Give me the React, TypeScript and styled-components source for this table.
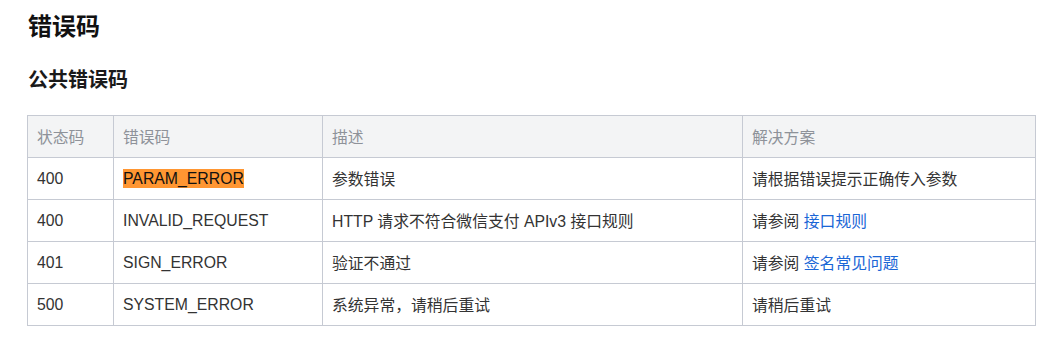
import React from 'react';
import styled, { createGlobalStyle } from 'styled-components';

const GlobalStyle = createGlobalStyle`
    body {
        margin: 0;
        background: #fff;
        font-family: "Liberation Sans", "Noto Sans CJK SC", sans-serif;
        color: #222;
    }
`;

const rows = [
    { status: '400', code: 'PARAM_ERROR', desc: '参数错误', fix: '请根据错误提示正确传入参数', mark: true },
    { status: '400', code: 'INVALID_REQUEST', desc: 'HTTP 请求不符合微信支付 APIv3 接口规则', fix: '请参阅', link: '接口规则' },
    { status: '401', code: 'SIGN_ERROR', desc: '验证不通过', fix: '请参阅', link: '签名常见问题' },
    { status: '500', code: 'SYSTEM_ERROR', desc: '系统异常，请稍后重试', fix: '请稍后重试' },
];

const App = () => {
    return (
        <>
            <GlobalStyle />
            <Page>
                <Title>错误码</Title>
                <SubTitle>公共错误码</SubTitle>
                <Table>
                    <colgroup>
                        <col style={{ width: 86 }} />
                        <col style={{ width: 209 }} />
                        <col style={{ width: 420 }} />
                        <col />
                    </colgroup>
                    <thead>
                        <tr>
                            <Th>状态码</Th>
                            <Th>错误码</Th>
                            <Th>描述</Th>
                            <Th>解决方案</Th>
                        </tr>
                    </thead>
                    <tbody>
                        {rows.map((r) => (
                            <tr key={r.code}>
                                <Td>{r.status}</Td>
                                <Td>{r.mark ? <Mark>{r.code}</Mark> : r.code}</Td>
                                <Td>{r.desc}</Td>
                                <Td>
                                    {r.fix}
                                    {r.link && <> <Link href="#">{r.link}</Link></>}
                                </Td>
                            </tr>
                        ))}
                    </tbody>
                </Table>
            </Page>
        </>
    );
};

const Page = styled.div`
    width: 1009px;
    padding: 10px 0 0 27px;
`;

const Title = styled.h1`
    margin: 0 0 0 1px;
    font-size: 24px;
    line-height: 34px;
    font-weight: 700;
    color: #111;
`;

const SubTitle = styled.h2`
    margin: 21px 0 0 1px;
    font-size: 20px;
    line-height: 30px;
    font-weight: 700;
    color: #1a1a1a;
`;

const Table = styled.table`
    margin-top: 20px;
    width: 1009px;
    border-collapse: collapse;
    table-layout: fixed;
    font-size: 15.8px;
`;

const Th = styled.th`
    height: 42px;
    padding: 0 9px;
    box-sizing: border-box;
    background: #f3f4f5;
    border: 1px solid #c6cad3;
    color: #8e9299;
    font-weight: 400;
    text-align: left;
`;

const Td = styled.td`
    height: 42px;
    padding: 0 9px;
    box-sizing: border-box;
    border: 1px solid #c6cad3;
    color: #333;
    text-align: left;
`;

const Mark = styled.span`
    background: #ff9632;
    color: #111;
    padding: 1px 0;
`;

const Link = styled.a`
    color: #1a66d6;
    text-decoration: none;
`;

export default App;
